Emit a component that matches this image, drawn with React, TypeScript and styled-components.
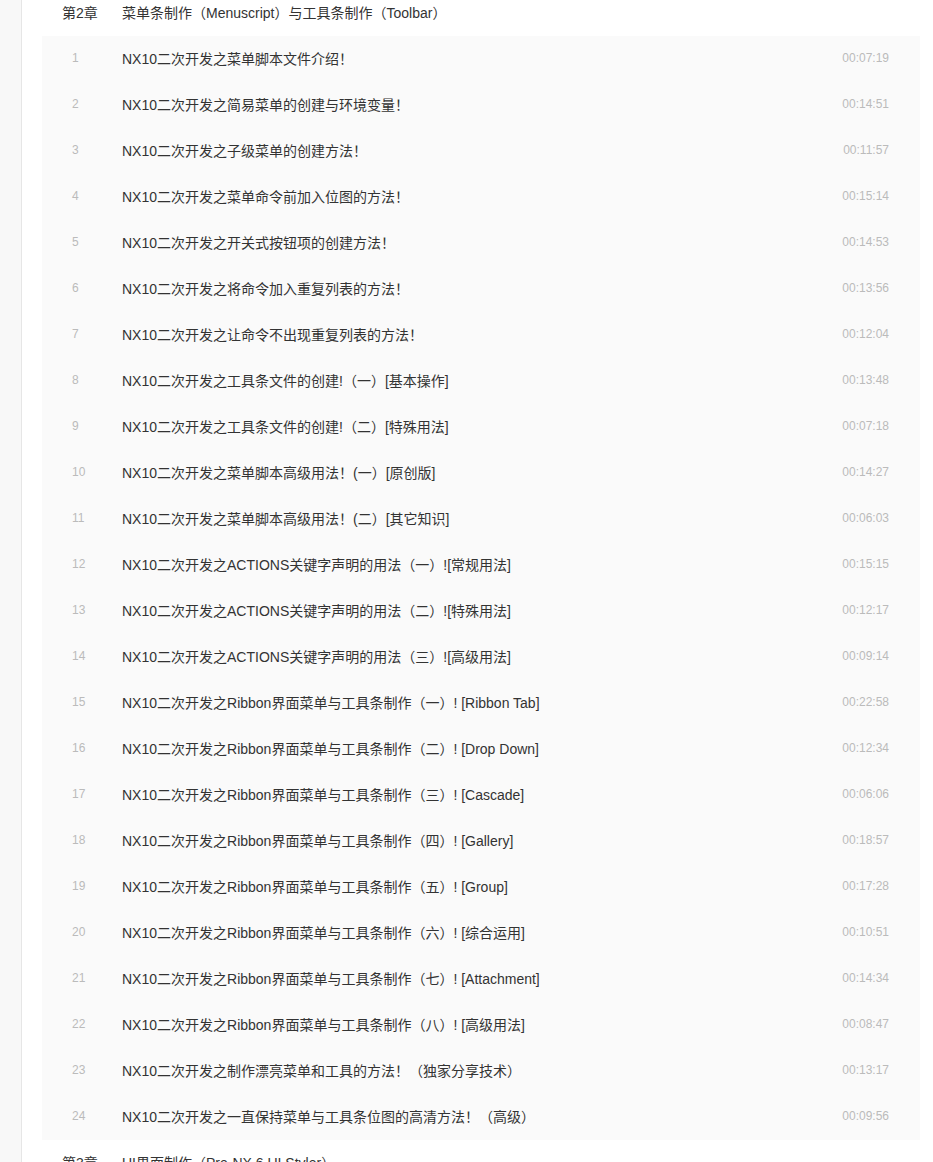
import { createGlobalStyle, styled } from 'styled-components'

const lessons: [string, string][] = [
  ['NX10二次开发之菜单脚本文件介绍！', '00:07:19'],
  ['NX10二次开发之简易菜单的创建与环境变量！', '00:14:51'],
  ['NX10二次开发之子级菜单的创建方法！', '00:11:57'],
  ['NX10二次开发之菜单命令前加入位图的方法！', '00:15:14'],
  ['NX10二次开发之开关式按钮项的创建方法！', '00:14:53'],
  ['NX10二次开发之将命令加入重复列表的方法！', '00:13:56'],
  ['NX10二次开发之让命令不出现重复列表的方法！', '00:12:04'],
  ['NX10二次开发之工具条文件的创建!（一）[基本操作]', '00:13:48'],
  ['NX10二次开发之工具条文件的创建!（二）[特殊用法]', '00:07:18'],
  ['NX10二次开发之菜单脚本高级用法！(一）[原创版]', '00:14:27'],
  ['NX10二次开发之菜单脚本高级用法！(二）[其它知识]', '00:06:03'],
  ['NX10二次开发之ACTIONS关键字声明的用法（一）![常规用法]', '00:15:15'],
  ['NX10二次开发之ACTIONS关键字声明的用法（二）![特殊用法]', '00:12:17'],
  ['NX10二次开发之ACTIONS关键字声明的用法（三）![高级用法]', '00:09:14'],
  ['NX10二次开发之Ribbon界面菜单与工具条制作（一）! [Ribbon Tab]', '00:22:58'],
  ['NX10二次开发之Ribbon界面菜单与工具条制作（二）! [Drop Down]', '00:12:34'],
  ['NX10二次开发之Ribbon界面菜单与工具条制作（三）! [Cascade]', '00:06:06'],
  ['NX10二次开发之Ribbon界面菜单与工具条制作（四）! [Gallery]', '00:18:57'],
  ['NX10二次开发之Ribbon界面菜单与工具条制作（五）! [Group]', '00:17:28'],
  ['NX10二次开发之Ribbon界面菜单与工具条制作（六）! [综合运用]', '00:10:51'],
  ['NX10二次开发之Ribbon界面菜单与工具条制作（七）! [Attachment]', '00:14:34'],
  ['NX10二次开发之Ribbon界面菜单与工具条制作（八）! [高级用法]', '00:08:47'],
  ['NX10二次开发之制作漂亮菜单和工具的方法！（独家分享技术）', '00:13:17'],
  ['NX10二次开发之一直保持菜单与工具条位图的高清方法！（高级）', '00:09:56'],
]

const App = () => {
  return (
    <>
      <GlobalStyle />
      <Page>
        <SideStrip />
        <Main>
          <ChapterHeader>
            <ChapterLabel>{'第2章'}</ChapterLabel>
            <ChapterTitle>{'菜单条制作（Menuscript）与工具条制作（Toolbar）'}</ChapterTitle>
          </ChapterHeader>
          <LessonList>
            {lessons.map(([title, time], i) => (
              <LessonRow key={i}>
                <LessonNo>{i + 1}</LessonNo>
                <LessonTitle>{title}</LessonTitle>
                <Duration>{time}</Duration>
              </LessonRow>
            ))}
          </LessonList>
          <ChapterHeader>
            <ChapterLabel>{'第3章'}</ChapterLabel>
            <ChapterTitle>{'UI界面制作（Pre-NX 6 UI Styler）'}</ChapterTitle>
          </ChapterHeader>
        </Main>
      </Page>
    </>
  )
}

export default App

const GlobalStyle = createGlobalStyle`
  body {
    margin: 0;
    background: #fff;
    font-family: "Liberation Sans", Arial, "Noto Sans CJK SC", sans-serif;
    text-spacing-trim: space-all;
    overflow: hidden;
  }
`

const Page = styled.div`
  display: flex;
  height: 1162px;
  overflow: hidden;
`

const SideStrip = styled.div`
  width: 21px;
  flex-shrink: 0;
  background: #f8f8f8;
  border-right: 1px solid #e6e6e6;
`

const Main = styled.main`
  flex: 1;
  margin-top: -10px;
  padding: 0 13px 0 20px;
`

const ChapterHeader = styled.div`
  box-sizing: border-box;
  height: 46px;
  padding: 0 0 2px 20px;
  display: flex;
  align-items: center;
  font-size: 14px;
  color: #333;
`

const ChapterLabel = styled.span`
  width: 60px;
  flex-shrink: 0;
`

const ChapterTitle = styled.span`
  flex: 1;
  white-space: nowrap;
`

const LessonList = styled.ul`
  margin: 0;
  padding: 0;
  list-style: none;
  background: #fafafa;
`

const LessonRow = styled.li`
  box-sizing: border-box;
  height: 46px;
  padding: 0 31px 2px 30px;
  display: flex;
  align-items: center;
`

const LessonNo = styled.span`
  width: 50px;
  flex-shrink: 0;
  font-size: 12px;
  color: #bbb;
`

const LessonTitle = styled.span`
  flex: 1;
  font-size: 14px;
  color: #333;
  white-space: nowrap;
`

const Duration = styled.span`
  font-size: 12px;
  color: #bbb;
`
